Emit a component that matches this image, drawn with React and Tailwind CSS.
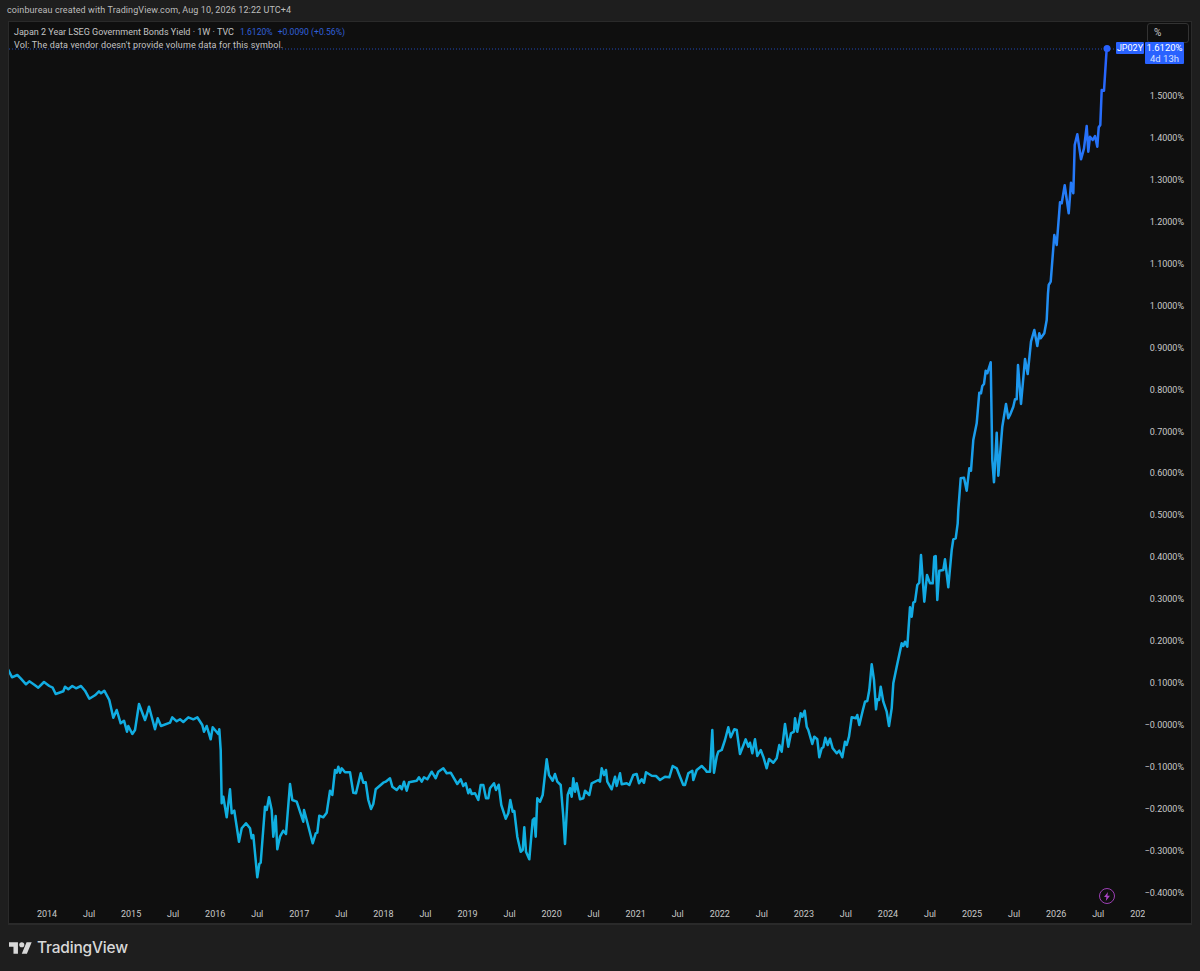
const segments = [
  // traced in groups, each group has its own offset (values are 3x)
  { ox: 0, oy: 650, pts: "24,58 36,82 52,75 62,85 78,103 88,94 103,104 115,113 132,96 148,108 158,113 167,132 190,124 195,110 205,118 217,108 228,115 243,108 255,122 268,146 285,136 297,124 303,130 313,122 328,150 340,203 350,180 362,220 372,212 381,245 385,228 397,252 405,240 417,162 435,210 440,195 447,170 465,238 473,205 483,228 510,218 517,202 530,214 540,208 550,216 565,202 580,208 592,202 607,225 612,245 620,228 632,268 638,232 655,252 658,238 662,300 665,460 670,440 680,502 690,418 695,490 703,482 717,575 725,535 738,520 750,535 755,565 760,555 772,682 778,642 782,638 795,470 800,480 807,442 815,480 820,560 827,498 832,598 840,560 850,542 858,552 870,402 877,450 890,455 910,515 912,480 920,510 938,580 947,550 952,548 958,497 970,502 980,488 990,422 997,435 1005,360 1010,368 1015,350 1020,368 1025,355 1035,367 1050,367 1060,428 1068,430 1082,370 1090,398 1097,397 1105,450 1113,477 1120,462 1127,418 1150,398 1157,395 1170,385 1177,410 1190,420" },
  { ox: 400, oy: 650, pts: "0,408 5,418 12,395 20,422 27,397 50,392 57,382 65,395 72,382 82,388 95,365 107,385 115,365 130,355 140,370 152,368 172,402 182,388 190,408 197,400 205,430 210,418 215,432 225,430 235,450 242,405 250,405 258,445 265,445 270,415 282,400 288,420 296,404 304,465 317,506 325,490 331,450 338,485 343,483 352,560 362,605 368,600 373,532 378,605 388,628 398,510 403,505 407,560 412,445 420,455 428,435 440,328 447,375 458,392 465,372 472,395 482,405 490,500 495,582 503,435 510,415 515,440 520,385 525,425 530,400 540,448 550,445 555,422 568,435 575,400 595,390 600,395 605,355 612,375 618,360 622,395 635,418 645,380 650,408 660,370 665,403 680,400 688,405 700,375 710,372 717,400 725,388 732,398 738,367 755,377 768,378 780,390 795,380 808,382 818,348 830,355 838,375 850,405 855,405 865,370 877,362 880,390 890,360 905,348 915,358 920,365 930,365 937,240 942,368 950,320 955,305 965,300 975,270 985,232 992,262 1003,238 1010,240 1020,312 1037,268 1045,290 1050,278 1057,310 1065,268 1072,318 1082,300 1090,320 1100,355 1107,327 1120,338 1130,325 1138,285" },
  { ox: 780, oy: 500, pts: "5,755 15,672 25,740 33,700 42,695 45,655 52,695 62,640 67,650 74,632 80,680 85,690 97,732 103,710 112,718 118,772 125,745 130,742 136,713 143,735 150,716 158,745 170,760 178,752 187,772 195,725 200,735 207,710 215,652 228,655 232,645 238,675 248,632 255,605 262,603 268,570 275,493 282,540 288,628 292,598 297,600 302,560 310,605 320,635 327,678 335,625 340,550 350,500 365,430 370,438 375,425 382,440 390,322 395,350 400,308 405,305 412,255 418,248 423,165 433,305 441,225 450,250 458,250 463,170 467,168 472,300 478,212 490,210 495,178 505,262 515,150 520,118 527,115 533,70" },
  { ox: 930, oy: 280, pts: "85,690 92,595 102,593 110,632 118,565 123,572 130,480 140,430 148,338 153,340 157,318 162,312 167,272 172,280 182,247 187,540 192,607 200,458 205,587 212,500 217,440 228,372 235,415 240,405 250,380 255,358 260,358 264,255 273,372 285,237 293,282 303,185 313,150 322,198 328,160 332,175 343,160 350,120 354,40" },
  { ox: 1020, oy: 40, pts: "86,735 92,725 103,585 110,615 120,487 125,490 134,436 146,520 153,428 160,460 164,315 172,283 183,358 192,325 200,258 205,335 210,290 218,300 225,288 232,320 236,262 241,255 245,150 252,152 260,25" },
];

const linePoints = segments
  .flatMap((s) =>
    s.pts.split(" ").map((p) => {
      const [x, y] = p.split(",").map(Number);
      return `${(s.ox + x / 3).toFixed(1)},${(s.oy + y / 3).toFixed(1)}`;
    })
  )
  .join(" ");

const priceLabels = [
  "1.5000%", "1.4000%", "1.3000%", "1.2000%", "1.1000%", "1.0000%", "0.9000%",
  "0.8000%", "0.7000%", "0.6000%", "0.5000%", "0.4000%", "0.3000%", "0.2000%",
  "0.1000%", "−0.0000%", "−0.1000%", "−0.2000%", "−0.3000%", "−0.4000%",
];

const timeLabels = [
  "2014", "Jul", "2015", "Jul", "2016", "Jul", "2017", "Jul", "2018", "Jul", "2019", "Jul", "2020", "Jul",
  "2021", "Jul", "2022", "Jul", "2023", "Jul", "2024", "Jul", "2025", "Jul", "2026", "Jul", "2027",
];

function App() {
  return (
    <div className="w-[1200px] h-[971px] flex flex-col bg-[#1e1e1e] font-['Roboto',sans-serif] text-[#c4c4c4] overflow-hidden">
      <div className="h-[21px] pl-[7px] pt-[2px] text-[9px] leading-[16px] tracking-[0.1px] text-[#bdbdbd]">
        coinbureau created with TradingView.com, Aug 10, 2026 12:22 UTC+4
      </div>

      <div className="relative mx-[8px] w-[1184px] h-[904px] bg-[#0f0f0f] border border-[#2a2a2a] border-b-2 flex flex-col">
        <div className="flex h-[875px] shrink-0">
          <div className="w-[1136px] relative">
            <svg width="1136" height="875" viewBox="9 22 1136 875" className="block">
              <defs>
                <linearGradient id="lineGrad" gradientUnits="userSpaceOnUse" x1="0" y1="48" x2="0" y2="880">
                  <stop offset="0" stopColor="#2962ff" />
                  <stop offset="0.32" stopColor="#2191f2" />
                  <stop offset="0.62" stopColor="#13a9e4" />
                  <stop offset="1" stopColor="#0fb1df" />
                </linearGradient>
              </defs>
              <line x1="9" y1="49" x2="1145" y2="49" stroke="#2962ff" strokeWidth="1" strokeDasharray="1 2" opacity="0.7" />
              <polyline points={linePoints} fill="none" stroke="url(#lineGrad)" strokeWidth="2.5" strokeLinejoin="round" />
              <circle cx="1107" cy="48.5" r="3.5" fill="#2962ff" />
            </svg>
          </div>
          <div className="w-[46px] flex flex-col items-end pt-[68px] pr-[7px] text-[9px] leading-[12px] gap-[30px] text-[#c9c9c9] whitespace-nowrap">
            {priceLabels.map((p) => (
              <div key={p} className="h-[11.95px]">{p}</div>
            ))}
          </div>
        </div>

        <div className="h-[27px] w-[1136px] overflow-hidden flex pl-[17px] pt-[11px] text-[9px] leading-[12px] text-[#c9c9c9]">
          {timeLabels.map((t, i) => (
            <div key={i} className="w-[42.05px] shrink-0 text-center">{t}</div>
          ))}
        </div>

        <div className="absolute left-[5px] top-[4px] text-[9px] leading-[13px] text-[#c4c4c4]">
          <div className="flex">
            <span>Japan 2 Year LSEG Government Bonds Yield · 1W · TVC</span>
            <span className="ml-[6px] text-[#2f5fd8] text-[8.6px]">1.6120%</span>
            <span className="ml-[5px] text-[#2f5fd8] text-[8.6px]">+0.0090 (+0.56%)</span>
          </div>
          <div className="tracking-[0.14px]">Vol: The data vendor doesn't provide volume data for this symbol.</div>
        </div>

        <div className="absolute left-[1138px] top-[1px] w-[42px] h-[20px] border border-[#333] rounded-[3px] bg-[#0f0f0f] pl-[6px] text-[10px] leading-[18px] text-[#c9c9c9]">
          %
        </div>

        <div className="absolute left-[1107px] top-[20px] w-[28px] h-[12px] rounded-[1px] bg-[#2962ff] text-white text-[9px] leading-[12px] text-center">
          JP02Y
        </div>
        <div className="absolute left-[1136px] top-[20px] w-[39px] h-[22px] rounded-[1px] bg-[#2962ff] text-white text-[9.5px] leading-[11px] text-center">
          <div>1.6120%</div>
          <div className="text-[#d5e0ff]">4d 13h</div>
        </div>

        <div className="absolute left-[1090px] top-[866px] w-[16px] h-[16px] rounded-full border border-[#9c3fb5] flex items-center justify-center">
          <svg width="8" height="9" viewBox="0 0 8 9">
            <path d="M5 0 1 5h2.4L2.8 9 7 3.8H4.4z" fill="#a844c4" />
          </svg>
        </div>
      </div>

      <div className="flex items-center pl-[9px] pt-[13px] gap-[5px]">
        <svg width="23" height="12" viewBox="0 4 36 18" className="shrink-0">
          <path d="M14 22H7V11H0V4h14v18zM28 22h-8l7.5-18h8L28 22z" fill="#d8d8d8" />
          <circle cx="20" cy="8" r="4" fill="#d8d8d8" />
        </svg>
        <span className="font-['Inter',sans-serif] font-medium text-[15.5px] leading-[20px] text-[#d8d8d8] tracking-[-0.2px]">TradingView</span>
      </div>
    </div>
  );
}

export default App;
